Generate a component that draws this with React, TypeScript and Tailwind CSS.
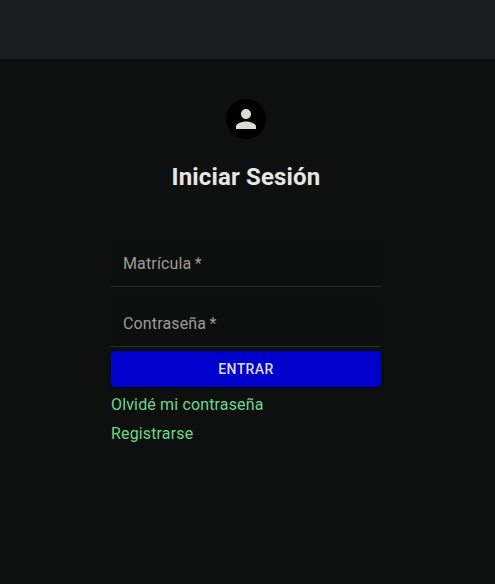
function Field({ label }: { label: string }) {
  return (
    <label className="flex h-12 w-full items-start rounded-t border-b border-[#2a2c2b] bg-[#0d0f0e] px-3 pt-[13px] text-[16px] leading-[23px] tracking-[0.15px] text-[#9d9a95]">
      <span>{label}{"\u2009*"}</span>
    </label>
  );
}

export default function App() {
  return (
    <div className="flex h-[584px] w-full flex-col bg-[#0e100f] font-['Roboto',sans-serif]">
      <header className="h-[59px] shrink-0 bg-[#1a1b1d]" />
      <main className="ml-[111px] mt-10 flex w-[270px] flex-col">
        <div className="flex h-10 w-10 items-center justify-center self-center rounded-full bg-black">
          <svg className="h-[30px] w-[30px]" viewBox="0 0 24 24" fill="#dcdad7">
            <path d="M12 12c2.21 0 4-1.79 4-4s-1.79-4-4-4-4 1.79-4 4 1.79 4 4 4zm0 2c-2.67 0-8 1.34-8 4v2h16v-2c0-2.66-5.33-4-8-4z" />
          </svg>
        </div>
        <h1 className="mt-[22px] text-center text-[24px] font-bold leading-8 tracking-[0.15px] text-[#e8e6e3]">Iniciar Sesión</h1>
        <form className="mt-[46px] flex flex-col">
          <div className="flex flex-col gap-3">
            <Field label="Matrícula" />
            <Field label="Contraseña" />
          </div>
          <button type="button" className="mt-1 h-9 rounded bg-[#0000cc] text-[14px] font-medium tracking-[0.4px] text-[#dcdad7] shadow-[0_2px_2px_rgba(0,0,0,0.2),0_1px_5px_rgba(0,0,0,0.12)]">ENTRAR</button>
          <a className="mt-1.5 text-[16px] leading-6 tracking-[0.15px] text-[#6cd78b]">Olvidé mi contraseña</a>
          <a className="mt-[5px] text-[16px] leading-6 tracking-[0.15px] text-[#6cd78b]">Registrarse</a>
        </form>
      </main>
    </div>
  );
}
